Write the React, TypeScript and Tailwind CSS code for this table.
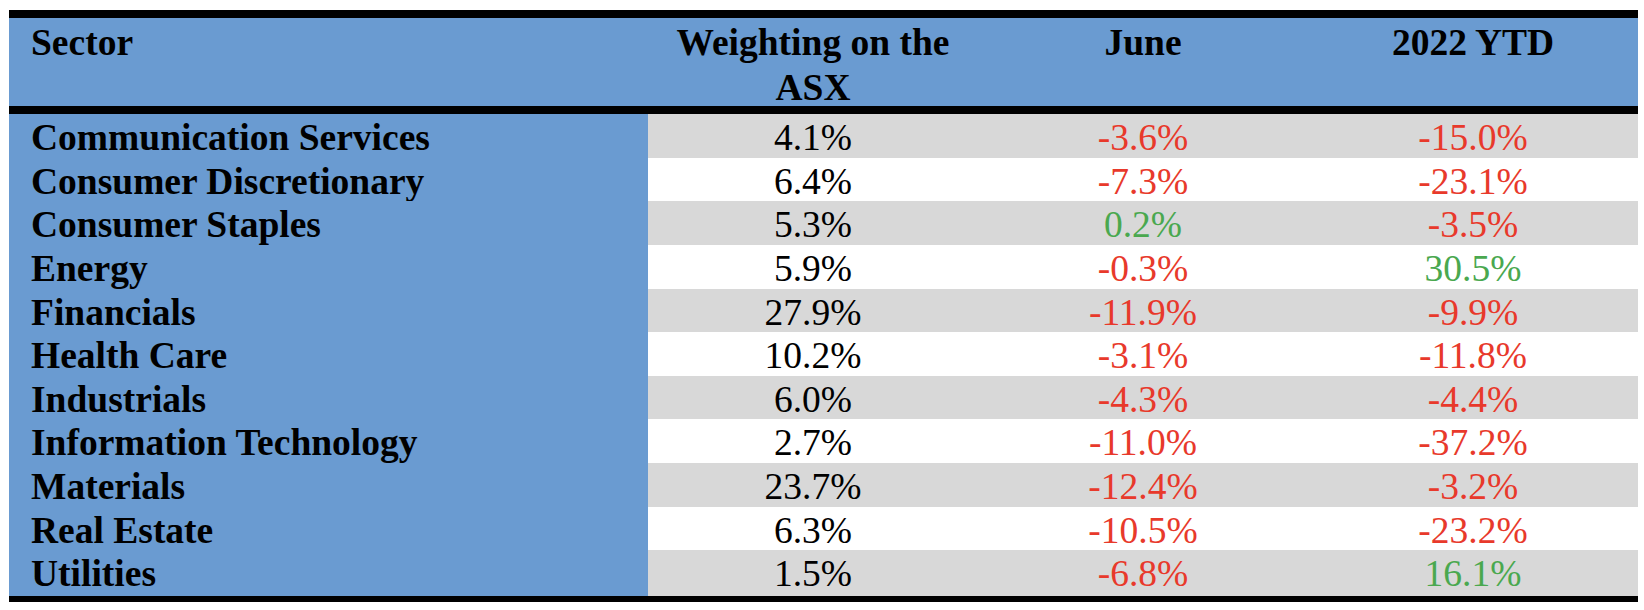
import React from 'react';

type Row = {
  sector: string;
  weight: string;
  june: string;
  ytd: string;
};

const rows: Row[] = [
  { sector: 'Communication Services', weight: '4.1%', june: '-3.6%', ytd: '-15.0%' },
  { sector: 'Consumer Discretionary', weight: '6.4%', june: '-7.3%', ytd: '-23.1%' },
  { sector: 'Consumer Staples', weight: '5.3%', june: '0.2%', ytd: '-3.5%' },
  { sector: 'Energy', weight: '5.9%', june: '-0.3%', ytd: '30.5%' },
  { sector: 'Financials', weight: '27.9%', june: '-11.9%', ytd: '-9.9%' },
  { sector: 'Health Care', weight: '10.2%', june: '-3.1%', ytd: '-11.8%' },
  { sector: 'Industrials', weight: '6.0%', june: '-4.3%', ytd: '-4.4%' },
  { sector: 'Information Technology', weight: '2.7%', june: '-11.0%', ytd: '-37.2%' },
  { sector: 'Materials', weight: '23.7%', june: '-12.4%', ytd: '-3.2%' },
  { sector: 'Real Estate', weight: '6.3%', june: '-10.5%', ytd: '-23.2%' },
  { sector: 'Utilities', weight: '1.5%', june: '-6.8%', ytd: '16.1%' },
];

// negative numbers red, positive green
const tone = (v: string) => (v.startsWith('-') ? 'text-[#e8392b]' : 'text-[#4aa84f]');

const App: React.FC = () => {
  return (
    <div
      className="w-[1644px] h-[610px] bg-white pt-[10px] pl-[9px]"
      style={{ fontFamily: '"Liberation Serif", "Times New Roman", serif' }}
    >
      <div className="w-[1629px] text-[37.5px] text-black">
        <div className="h-[7.5px] bg-black" />

        {/* header */}
        <div className="grid grid-cols-[639px_330px_330px_330px] h-[88.5px] bg-[#6a9bd1] font-bold leading-[45px] pt-[2px]">
          <div className="pl-[22px]">Sector</div>
          <div className="text-center">
            Weighting on the
            <br />
            ASX
          </div>
          <div className="text-center">June</div>
          <div className="text-center">2022 YTD</div>
        </div>

        <div className="h-[8px] bg-black" />

        {/* body */}
        <div className="flex flex-col">
          {rows.map((r, i) => {
            const stripe = i % 2 === 0 ? 'bg-[#d8d8d8]' : 'bg-white';
            return (
              <div
                key={r.sector}
                className="grid grid-cols-[639px_330px_330px_330px] h-[43.64px] leading-[43.64px]"
              >
                <div className="bg-[#6a9bd1] pl-[22px] pt-[2px] font-bold whitespace-nowrap">
                  {r.sector}
                </div>
                <div className={`${stripe} pt-[2px] text-center`}>{r.weight}</div>
                <div className={`${stripe} pt-[2px] text-center ${tone(r.june)}`}>{r.june}</div>
                <div className={`${stripe} pt-[2px] text-center ${tone(r.ytd)}`}>{r.ytd}</div>
              </div>
            );
          })}
        </div>

        <div className="h-[8px] bg-black" />
      </div>
    </div>
  );
};

export default App;
